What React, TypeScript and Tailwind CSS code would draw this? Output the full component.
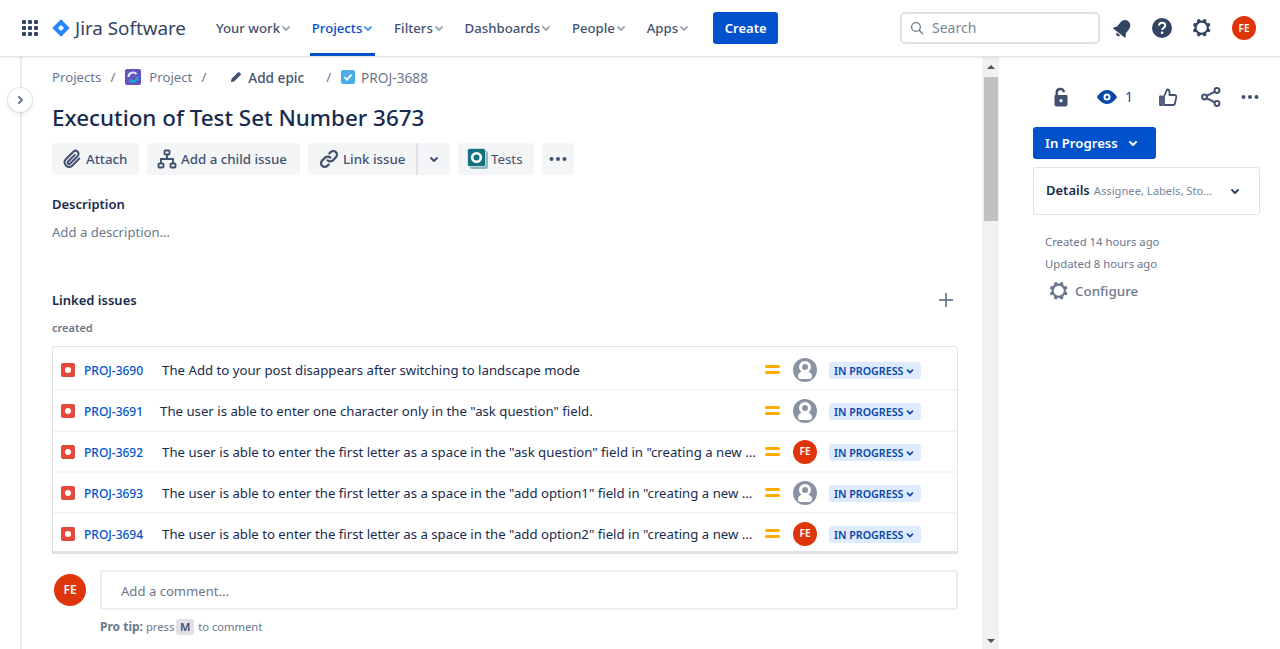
import React from 'react';

const FONT = { fontFamily: '"Noto Sans", sans-serif' };

const Chevron = ({ className = '' }: { className?: string }) => (
  <svg viewBox="0 0 24 24" className={className} fill="currentColor">
    <path d="M8.292 10.293a1.009 1.009 0 000 1.419l2.939 2.965c.218.215.5.322.779.322s.556-.107.769-.322l2.93-2.955a1.01 1.01 0 000-1.419.987.987 0 00-1.406 0l-2.298 2.317-2.307-2.327a.99.99 0 00-1.406 0z" />
  </svg>
);

const Gear = ({ className = '' }: { className?: string }) => (
  <svg viewBox="0 0 24 24" className={className} fill="currentColor">
    <path fillRule="evenodd" d="M11.701 16.7a5.002 5.002 0 110-10.003 5.002 5.002 0 010 10.004m8.368-3.117a1.995 1.995 0 01-1.346-1.885c0-.876.563-1.613 1.345-1.885a.48.48 0 00.315-.574 8.947 8.947 0 00-.836-1.993.477.477 0 00-.598-.195 2.04 2.04 0 01-1.29.08 1.988 1.988 0 01-1.404-1.395 2.04 2.04 0 01.076-1.297.478.478 0 00-.196-.597 8.98 8.98 0 00-1.975-.826.479.479 0 00-.574.314 1.995 1.995 0 01-1.885 1.346 1.994 1.994 0 01-1.884-1.345.482.482 0 00-.575-.315c-.708.2-1.379.485-2.004.842a.47.47 0 00-.198.582A2.002 2.002 0 014.445 7.06a.478.478 0 00-.595.196 8.946 8.946 0 00-.833 1.994.48.48 0 00.308.572 1.995 1.995 0 011.323 1.877c0 .867-.552 1.599-1.324 1.877a.479.479 0 00-.308.57 8.99 8.99 0 00.723 1.79.477.477 0 00.624.194c.595-.273 1.343-.264 2.104.238.117.077.225.185.302.3.527.8.512 1.58.198 2.188a.473.473 0 00.168.628 8.946 8.946 0 002.11.897.474.474 0 00.57-.313 1.995 1.995 0 011.886-1.353c.875 0 1.612.564 1.884 1.346a.48.48 0 00.575.315 8.964 8.964 0 002.084-.882.474.474 0 00.167-.63c-.318-.608-.337-1.393.191-2.195.077-.116.185-.225.302-.302.772-.511 1.527-.513 2.125-.23a.477.477 0 00.628-.19 8.925 8.925 0 00.728-1.793.478.478 0 00-.314-.573" />
  </svg>
);

const Avatar = ({ size = 'w-6 h-6', text = 'text-[10px]' }: { size?: string; text?: string }) => (
  <div className={`${size} ${text} rounded-full bg-[#de350b] text-white font-semibold flex items-center justify-center shrink-0`}>FE</div>
);

const GreyAvatar = () => (
  <svg viewBox="0 0 24 24" className="w-6 h-6 shrink-0">
    <circle cx="12" cy="12" r="12" fill="#8993a4" />
    <circle cx="12" cy="9" r="4.500" fill="none" stroke="#fff" strokeWidth="3" />
    <path d="M5 18.500c0-3 1.600-4.500 4-4.500h6c2.400 0 4 1.500 4 4.500 0 1.600-.9 2.500-2.200 2.500H7.200C5.900 21 5 20.100 5 18.500z" fill="#fff" />
  </svg>
);

const NavItem = ({ label, active = false }: { label: string; active?: boolean }) => (
  <div className={`relative h-full flex items-center text-[13.2px] font-medium ${active ? 'text-[#0052cc]' : 'text-[#42526e]'}`}>
    <span className="pt-[2px]">{label}</span>
    <Chevron className={`w-6 h-6 -ml-[6px] ${active ? 'text-[#4c9aff]' : 'text-[#a5adba]'}`} />
    {active && <div className="absolute bottom-0 left-[-2px] right-[5px] h-[3px] bg-[#0052cc]" />}
  </div>
);

const TopBar = () => (
  <header className="h-[57px] shrink-0 bg-white border-b border-[#dfe1e6] shadow-[0_1px_2px_rgba(9,30,66,0.08)] flex items-center pl-[22px] pr-[24px] relative z-10">
    <svg viewBox="0 0 16 16" className="w-4 h-4 text-[#344563] shrink-0" fill="currentColor">
      <rect x="0" y="0" width="4" height="4" rx="1" /><rect x="6" y="0" width="4" height="4" rx="1" /><rect x="12" y="0" width="4" height="4" rx="1" />
      <rect x="0" y="6" width="4" height="4" rx="1" /><rect x="6" y="6" width="4" height="4" rx="1" /><rect x="12" y="6" width="4" height="4" rx="1" />
      <rect x="0" y="12" width="4" height="4" rx="1" /><rect x="6" y="12" width="4" height="4" rx="1" /><rect x="12" y="12" width="4" height="4" rx="1" />
    </svg>
    <div className="flex items-center ml-[14px] w-[134px] shrink-0">
      <svg viewBox="0 0 18 18" className="w-[18px] h-[18px] shrink-0">
        <path d="M9 0.3 17.7 9 9 17.7 0.3 9z" fill="#2684ff" />
        <path d="M9 5.9 12.1 9 9 12.1 5.9 9z" fill="#fff" />
      </svg>
      <span className="ml-[5px] text-[18.8px] leading-none text-[#344563] whitespace-nowrap">Jira Software</span>
    </div>
    <nav className="flex items-center h-full ml-[30px] gap-[13.8px] whitespace-nowrap">
      <NavItem label="Your work" />
      <NavItem label="Projects" active />
      <NavItem label="Filters" />
      <NavItem label="Dashboards" />
      <NavItem label="People" />
      <NavItem label="Apps" />
    </nav>
    <button className="ml-[17px] h-8 w-[65px] pt-[2px] rounded-[3px] bg-[#0052cc] text-white text-[13px] font-semibold flex items-center justify-center">Create</button>
    <div className="ml-auto flex items-center">
      <div className="w-[200px] h-8 rounded-[5px] border-2 border-[#dfe1e6] flex items-center pl-[8px] text-sm text-[#7a869a]">
        <svg viewBox="0 0 16 16" className="w-[14px] h-[14px] text-[#6b778c]" fill="none" stroke="currentColor" strokeWidth="1.5">
          <circle cx="6.8" cy="6.8" r="5" /><path d="m10.5 10.5 4 4" strokeLinecap="round" />
        </svg>
        <span className="ml-[8px]">Search</span>
      </div>
      <svg viewBox="0 0 24 24" className="ml-[11px] w-6 h-6 text-[#344563]" fill="currentColor">
        <g transform="rotate(38 12 12)">
          <path d="M12 3.500c-3.300 0-5.500 2.600-5.500 6V14.500L4.500 17v1.500h15V17l-2-2.500v-5c0-3.400-2.200-6-5.500-6z" />
          <path d="M9.800 19.500a2.200 2.200 0 0 0 4.400 0z" />
        </g>
      </svg>
      <svg viewBox="0 0 24 24" className="ml-[15px] w-6 h-6 text-[#344563]">
        <circle cx="12" cy="12" r="10" fill="currentColor" />
        <path d="M8.900 9.700c.2-1.800 1.500-2.900 3.200-2.900 1.800 0 3.100 1.100 3.100 2.700 0 2.400-3.100 2.500-3.100 4.500" fill="none" stroke="#fff" strokeWidth="2" />
        <circle cx="12.100" cy="16.800" r="1.300" fill="#fff" />
      </svg>
      <Gear className="ml-[16px] w-6 h-6 text-[#344563]" />
      <div className="ml-[18px]"><Avatar /></div>
    </div>
  </header>
);

const ActionButton = ({ children, className = '' }: { children: React.ReactNode; className?: string }) => (
  <button className={`h-8 rounded-[3px] bg-[#f4f5f7] text-[#42526e] text-[13.3px] font-medium flex items-center whitespace-nowrap ${className}`}>
    {children}
  </button>
);

const ButtonText = ({ children, className = '' }: { children: React.ReactNode; className?: string }) => (
  <span className={`pt-[2px] ${className}`}>{children}</span>
);

const Dots = ({ className = '' }: { className?: string }) => (
  <svg viewBox="0 0 18 4" className={className} fill="currentColor">
    <circle cx="2.500" cy="2" r="2" /><circle cx="9" cy="2" r="2" /><circle cx="15.500" cy="2" r="2" />
  </svg>
);

const Breadcrumbs = () => (
  <div className="h-[20px] flex items-center text-[13.2px] text-[#6b778c] whitespace-nowrap">
    <span className="pt-[2px]">Projects</span>
    <span className="ml-[9px] pt-[2px]">/</span>
    <svg viewBox="0 0 16 16" className="ml-[10px] w-4 h-4 shrink-0">
      <rect width="16" height="16" rx="2" fill="#6554c0" />
      <path d="M3.500 8a4.500 4.500 0 0 1 8-2.800" fill="none" stroke="#deebff" strokeWidth="2" />
      <path d="M12.500 8a4.500 4.500 0 0 1-8 2.800" fill="none" stroke="#00b8d9" strokeWidth="2" />
    </svg>
    <span className="ml-[8px] pt-[2px]">Project</span>
    <span className="ml-[9px] pt-[2px]">/</span>
    <svg viewBox="0 0 14 14" className="ml-[23px] w-[14px] h-[14px] text-[#42526e]" fill="currentColor">
      <path d="M9.700 1.700 12.300 4.300 5.400 11.200 1.800 12.200 2.800 8.600z" />
    </svg>
    <span className="ml-[5px] pt-[2px] text-[13.6px] font-medium text-[#42526e]">Add epic</span>
    <span className="ml-[22px] pt-[2px]">/</span>
    <svg viewBox="0 0 14 14" className="ml-[10px] w-[14px] h-[14px] shrink-0">
      <rect width="14" height="14" rx="2" fill="#4bade8" />
      <path d="m3.500 7.200 2.500 2.500 4.500-5" fill="none" stroke="#fff" strokeWidth="1.800" />
    </svg>
    <span className="ml-[6px] pt-[2px] text-[13.7px]">PROJ-3688</span>
  </div>
);

const Actions = () => (
  <div className="mt-[9px] flex items-center">
    <ActionButton className="w-[87px] pl-[9px]">
      <svg viewBox="0 0 24 24" className="w-[22px] h-[22px]" fill="none" stroke="currentColor" strokeWidth="2.200" strokeLinecap="round">
        <path d="M20 11.500 12 19.500a5 5 0 0 1-7-7l8.500-8.500a3.300 3.300 0 0 1 4.700 4.700L10 17a1.600 1.600 0 0 1-2.300-2.300L15 7.500" />
      </svg>
      <ButtonText className="ml-[3px]">Attach</ButtonText>
    </ActionButton>
    <ActionButton className="ml-2 w-[153px] pl-[10px]">
      <svg viewBox="0 0 20 20" className="w-[20px] h-[20px]" fill="none" stroke="currentColor" strokeWidth="1.900">
        <rect x="7.500" y="1.500" width="5" height="4" rx="1" />
        <rect x="1.500" y="14.500" width="5" height="4" rx="1" />
        <rect x="13.500" y="14.500" width="5" height="4" rx="1" />
        <path d="M10 5.500V10M4 14.500V10h12v4.500" />
      </svg>
      <ButtonText className="ml-[4px]">Add a child issue</ButtonText>
    </ActionButton>
    <ActionButton className="ml-2 w-[110px] pl-[10px] border-r-2 border-[#dfe1e6] rounded-r-none">
      <svg viewBox="0 0 24 24" className="w-[22px] h-[22px]" fill="none" stroke="currentColor" strokeWidth="2.400" strokeLinecap="round">
        <path d="M10.500 13.500a4 4 0 0 0 5.700 0l3.300-3.300a4 4 0 0 0-5.700-5.700l-1.500 1.500" />
        <path d="M13.500 10.500a4 4 0 0 0-5.700 0l-3.300 3.300a4 4 0 0 0 5.700 5.700l1.500-1.500" />
      </svg>
      <ButtonText className="ml-[3px]">Link issue</ButtonText>
    </ActionButton>
    <ActionButton className="w-[32px] justify-center rounded-l-none">
      <Chevron className="w-6 h-6" />
    </ActionButton>
    <ActionButton className="ml-2 w-[76px] pl-[9px]">
      <svg viewBox="0 0 22 22" className="w-[22px] h-[22px] shrink-0">
        <rect x="3" y="3" width="18" height="18" rx="2" fill="#8fb9c0" />
        <rect x="0.500" y="0.500" width="18" height="18" rx="2" fill="#14727f" stroke="#fff" strokeWidth="0.600" />
        <circle cx="9.500" cy="9.500" r="4.300" fill="none" stroke="#fff" strokeWidth="2.600" />
      </svg>
      <ButtonText className="ml-[2px] font-normal">Tests</ButtonText>
    </ActionButton>
    <ActionButton className="ml-2 w-[32px] justify-center">
      <Dots className="w-[18px] h-1" />
    </ActionButton>
  </div>
);

const ISSUES = [
  { key: 'PROJ-3690', title: 'The Add to your post disappears after switching to landscape mode', me: false, ml: 'ml-[19px]' },
  { key: 'PROJ-3691', title: 'The user is able to enter one character only in the "ask question" field.', me: false, ml: 'ml-[17px]' },
  { key: 'PROJ-3692', title: 'The user is able to enter the first letter as a space in the "ask question" field in "creating a new ...', me: true, ml: 'ml-[19px]' },
  { key: 'PROJ-3693', title: 'The user is able to enter the first letter as a space in the "add option1" field in "creating a new ...', me: false, ml: 'ml-[19px]' },
  { key: 'PROJ-3694', title: 'The user is able to enter the first letter as a space in the "add option2" field in "creating a new ...', me: true, ml: 'ml-[19px]' },
];

const IssueRow = ({ issue }: { issue: (typeof ISSUES)[number] }) => (
  <div className="h-[41px] flex items-center pl-[8px] border-b-2 border-[#f4f5f7]">
    <div className="w-[14px] h-[14px] rounded-[2px] bg-[#e5493a] flex items-center justify-center shrink-0">
      <div className="w-[6px] h-[6px] rounded-full bg-white" />
    </div>
    <a className="ml-[9px] pt-[2px] text-xs font-medium text-[#0052cc] whitespace-nowrap">{issue.key}</a>
    <span className={`${issue.ml} pt-[2px] text-[13.2px] text-[#172b4d] whitespace-nowrap`}>{issue.title}</span>
    <div className="ml-auto flex items-center shrink-0">
      <div className="w-[15px] flex flex-col gap-[3px]">
        <div className="h-[3px] rounded-full bg-[#ffab00]" />
        <div className="h-[3px] rounded-full bg-[#ffab00]" />
      </div>
      <div className="ml-[13px]">{issue.me ? <Avatar /> : <GreyAvatar />}</div>
      <div className="ml-[12px] mr-[36px] mt-[2px] h-[17px] w-[92px] pt-[1px] rounded-[3px] bg-[#deebff] text-[#0747a6] text-[10.7px] font-semibold flex items-center pl-[5px] whitespace-nowrap">
        IN PROGRESS
        <Chevron className="w-5 h-5 -ml-[3px] shrink-0" />
      </div>
    </div>
  </div>
);

const MainColumn = () => (
  <div className="w-[960px] shrink-0 pl-[30px] pr-[24px] overflow-hidden">
    <div className="pt-[10px]"><Breadcrumbs /></div>
    <h1 className="mt-[15px] h-[32px] text-[22.4px] leading-[32px] font-medium text-[#172b4d] whitespace-nowrap">Execution of Test Set Number 3673</h1>
    <Actions />
    <h2 className="mt-[20px] text-[13px] leading-[18px] font-semibold text-[#172b4d]">Description</h2>
    <p className="mt-[9px] text-[13.1px] leading-[20px] text-[#6b778c]">Add a description...</p>
    <div className="mt-[46px] flex items-center justify-between">
      <h2 className="text-[13px] leading-[20px] font-semibold text-[#172b4d]">Linked issues</h2>
      <svg viewBox="0 0 24 24" className="w-6 h-6 text-[#5e6c84]" fill="currentColor">
        <rect x="11.200" y="5" width="1.600" height="14" /><rect x="5" y="11.200" width="14" height="1.600" />
      </svg>
    </div>
    <div className="mt-[8px] text-[11px] leading-[16px] font-semibold text-[#6b778c]">created</div>
    <div className="mt-[10px] h-[208px] pt-[3px] rounded-t-[3px] border border-b-[3px] border-[#dfe1e6] overflow-hidden">
      {ISSUES.map((issue) => (
        <IssueRow key={issue.key} issue={issue} />
      ))}
    </div>
    <div className="mt-[16px] flex items-start">
      <div className="mt-[4px] ml-[2px]"><Avatar size="w-8 h-8" text="text-xs" /></div>
      <div className="ml-[14px] flex-1">
        <div className="h-[40px] pt-[3px] rounded-[3px] border-2 border-[#ebecf0] flex items-center pl-[19px] text-[13.1px] text-[#6b778c]">Add a comment...</div>
        <div className="mt-[8px] h-[18px] flex items-center text-[11.2px] text-[#6b778c]">
          <span className="text-[12px] font-bold">Pro tip:</span>
          <span className="ml-[3px]">press</span>
          <span className="ml-[2px] w-[18px] h-[16px] rounded-[3px] bg-[#dfe1e6] text-[#42526e] font-semibold flex items-center justify-center">M</span>
          <span className="ml-[4px]">to comment</span>
        </div>
      </div>
    </div>
  </div>
);

const Scrollbar = () => (
  <div className="w-[17px] shrink-0 bg-[#f1f1f1] flex flex-col items-center">
    <div className="h-[20px] flex items-center justify-center">
      <div className="w-0 h-0 border-x-[4px] border-x-transparent border-b-[4px] border-b-[#505050]" />
    </div>
    <div className="w-[14px] h-[144px] bg-[#c1c1c1]" />
    <div className="mt-auto h-[17px] flex items-center justify-center">
      <div className="w-0 h-0 border-x-[4px] border-x-transparent border-t-[4px] border-t-[#505050]" />
    </div>
  </div>
);

const SidePanel = () => (
  <aside className="flex-1 pl-[34px] pr-[20px] pt-[28px]">
    <div className="h-[24px] flex items-center text-[#42526e]">
      <svg viewBox="0 0 24 24" className="ml-[16px] w-6 h-6" fill="currentColor">
        <path fillRule="evenodd" d="M6.500 10V7.500a4.800 4.800 0 0 1 9.300-1.700l.4 1.100-2.300.7-.3-.9A2.400 2.400 0 0 0 9 7.500V10h8.500a1 1 0 0 1 1 1v8.500a2 2 0 0 1-2 2h-9a2 2 0 0 1-2-2V11a1 1 0 0 1 .5-1zm5.500 7.300a1.600 1.600 0 1 0 0-3.200 1.600 1.600 0 0 0 0 3.200z" />
      </svg>
      <svg viewBox="0 0 24 24" className="ml-[22px] w-6 h-6 text-[#0747a6]" fill="currentColor">
        <path fillRule="evenodd" d="M12 5c5 0 9 5 10 7-1 2-5 7-10 7S3 14 2 12c1-2 5-7 10-7zm0 10.500a3.500 3.500 0 1 0 0-7 3.500 3.500 0 0 0 0 7zm0-2a1.500 1.500 0 1 1 0-3 1.500 1.500 0 0 1 0 3z" />
      </svg>
      <span className="ml-[6px] text-sm text-[#0747a6]">1</span>
      <svg viewBox="0 0 24 24" className="ml-[23px] w-6 h-6" fill="none" stroke="currentColor" strokeWidth="1.800" strokeLinejoin="round">
        <path d="M8 11.500 11 4.500c1.500 0 2.500 1 2.500 2.500v3h5a1.800 1.800 0 0 1 1.800 2.200l-1.300 6a2 2 0 0 1-2 1.800H8z" />
        <path d="M4 11.500h2V20H4z" />
      </svg>
      <svg viewBox="0 0 24 24" className="ml-[19px] w-6 h-6" fill="none" stroke="currentColor" strokeWidth="2">
        <circle cx="5.500" cy="12" r="2.400" /><circle cx="18" cy="5.500" r="2.400" /><circle cx="18" cy="18.500" r="2.400" />
        <path d="m7.600 10.900 8.300-4.300M7.600 13.100l8.300 4.300" />
      </svg>
      <Dots className="ml-[18px] w-[18px] h-1" />
    </div>
    <button className="mt-[18px] w-[123px] h-8 rounded-[3px] bg-[#0052cc] text-white text-[13.2px] font-semibold flex items-center pl-[12px]">
      <span className="pt-[2px]">In Progress</span>
      <Chevron className="ml-[3px] w-6 h-6 shrink-0" />
    </button>
    <div className="mt-[8px] w-[227px] h-[48px] rounded-[3px] border border-[#dfe1e6] flex items-center pl-[12px] pr-[12px] whitespace-nowrap">
      <span className="text-[13px] font-semibold text-[#172b4d]">Details</span>
      <span className="ml-[4px] text-[11.2px] text-[#7a869a]">Assignee, Labels, Sto...</span>
      <Chevron className="ml-auto w-6 h-6 text-[#344563] shrink-0" />
    </div>
    <div className="mt-[16px] pl-[12px] text-[11.3px] leading-[22px] text-[#6b778c]">
      <div>Created 14 hours ago</div>
      <div>Updated 8 hours ago</div>
    </div>
    <div className="mt-[4px] pl-[14px] flex items-center text-[13.4px] font-medium text-[#6b778c]">
      <Gear className="w-6 h-6 shrink-0" />
      <span className="ml-[4px]">Configure</span>
    </div>
  </aside>
);

const App: React.FC = () => {
  return (
    <div className="h-[649px] w-[1280px] bg-white flex flex-col overflow-hidden" style={FONT}>
      <TopBar />
      <div className="flex-1 flex min-h-0 relative">
        <div className="w-[22px] shrink-0 border-r-2 border-[#ebecf0]" />
        <MainColumn />
        <Scrollbar />
        <SidePanel />
        {/* collapse toggle sits over the sidebar edge */}
        <div className="absolute left-[8px] top-[31px] w-6 h-6 rounded-full bg-white shadow-[0_0_0_1px_rgba(9,30,66,0.08),0_2px_4px_1px_rgba(9,30,66,0.08)] flex items-center justify-center text-[#6b778c]">
          <Chevron className="w-6 h-6 -rotate-90" />
        </div>
      </div>
    </div>
  );
};

export default App;
